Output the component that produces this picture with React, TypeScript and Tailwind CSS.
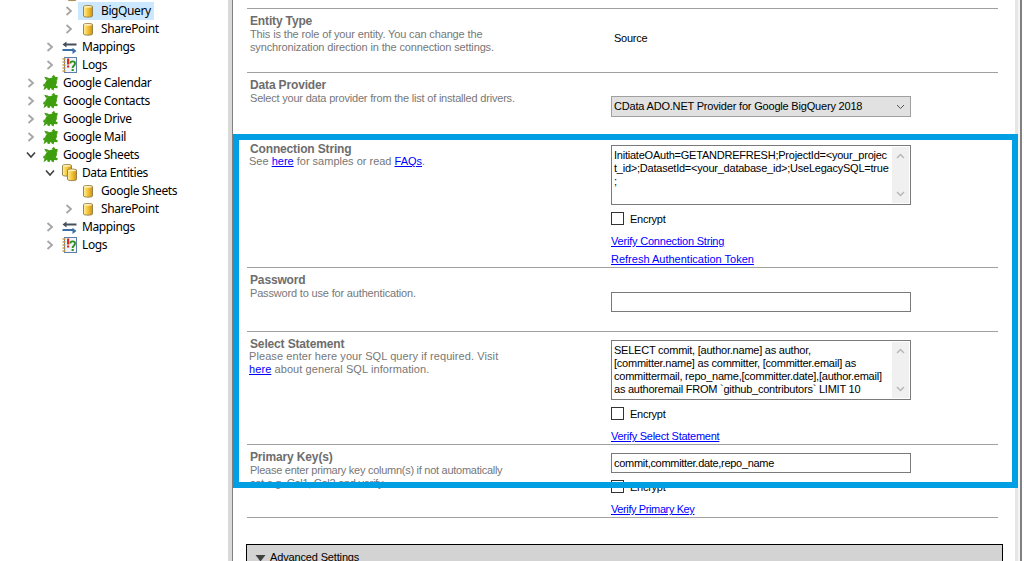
import type { ReactNode } from 'react';

type NodeIcon = 'db' | 'dbs' | 'map' | 'log' | 'google';
type TreeNode = {
  label: string;
  level: 1 | 2 | 3;
  icon: NodeIcon;
  arrow?: 'open' | 'closed';
  selected?: boolean;
};

const LEVEL_PAD: Record<number, string> = {
  1: 'pl-[25px]',
  2: 'pl-[44px]',
  3: 'pl-[63px]',
};

// first row is scrolled off, only the bottom of its icon shows
const TREE: TreeNode[] = [
  { label: '', level: 2, icon: 'dbs', arrow: 'open' },
  { label: 'BigQuery', level: 3, icon: 'db', arrow: 'closed', selected: true },
  { label: 'SharePoint', level: 3, icon: 'db', arrow: 'closed' },
  { label: 'Mappings', level: 2, icon: 'map', arrow: 'closed' },
  { label: 'Logs', level: 2, icon: 'log', arrow: 'closed' },
  { label: 'Google Calendar', level: 1, icon: 'google', arrow: 'closed' },
  { label: 'Google Contacts', level: 1, icon: 'google', arrow: 'closed' },
  { label: 'Google Drive', level: 1, icon: 'google', arrow: 'closed' },
  { label: 'Google Mail', level: 1, icon: 'google', arrow: 'closed' },
  { label: 'Google Sheets', level: 1, icon: 'google', arrow: 'open' },
  { label: 'Data Entities', level: 2, icon: 'dbs', arrow: 'open' },
  { label: 'Google Sheets', level: 3, icon: 'db' },
  { label: 'SharePoint', level: 3, icon: 'db', arrow: 'closed' },
  { label: 'Mappings', level: 2, icon: 'map', arrow: 'closed' },
  { label: 'Logs', level: 2, icon: 'log', arrow: 'closed' },
];

function Arrow({ kind }: { kind?: 'open' | 'closed' }) {
  return (
    <span className="flex h-[18px] w-[12px] shrink-0 items-center justify-center">
      {kind === 'closed' && (
        <svg width="8" height="10" viewBox="0 0 8 10" fill="none">
          <path d="M1.5 1 L6 5 L1.5 9" stroke="#a6a6a6" strokeWidth="1.8" />
        </svg>
      )}
      {kind === 'open' && (
        <svg width="10" height="8" viewBox="0 0 10 8" fill="none">
          <path d="M1 1.5 L5 6 L9 1.5" stroke="#404040" strokeWidth="1.6" />
        </svg>
      )}
    </span>
  );
}

function Cylinder({ x = 0, y = 0 }: { x?: number; y?: number }) {
  return (
    <g transform={`translate(${x} ${y})`}>
      <defs>
        <linearGradient id="gold" x1="0" y1="0" x2="1" y2="0">
          <stop offset="0" stopColor="#fff0a8" />
          <stop offset="0.45" stopColor="#f6c93c" />
          <stop offset="1" stopColor="#d3920c" />
        </linearGradient>
      </defs>
      <path
        d="M0.5 1.5 C0.5 0.3 9.5 0.3 9.5 1.5 V11 C9.5 12.5 0.5 12.5 0.5 11 Z"
        fill="url(#gold)"
        stroke="#8f7a45"
        strokeWidth="0.9"
      />
      <ellipse cx="5" cy="1.8" rx="4" ry="0.9" fill="#fdf2c4" />
    </g>
  );
}

function Icon({ name }: { name: NodeIcon }) {
  if (name === 'db') {
    return (
      <svg width="15" height="18" viewBox="0 0 15 18" className="shrink-0">
        <Cylinder x={2} y={3} />
      </svg>
    );
  }
  if (name === 'dbs') {
    return (
      <svg width="15" height="18" viewBox="0 0 15 18" className="shrink-0">
        <Cylinder x={0} y={0} />
        <Cylinder x={5} y={4.5} />
      </svg>
    );
  }
  if (name === 'map') {
    return (
      <svg width="15" height="18" viewBox="0 0 15 18" className="shrink-0">
        <path d="M14.5 5.5 H4.5 V3.5 L0.5 6.5 L4.5 9.5 V7.5 H14.5 Z" fill="#46505c" />
        <path d="M0.5 11 H10.5 V9.8 L14.5 13 L10.5 16 V13 H0.5 Z" fill="#3b6fa8" />
      </svg>
    );
  }
  if (name === 'log') {
    return (
      <svg width="15" height="18" viewBox="0 0 15 18" className="shrink-0">
        <rect x="2.5" y="1.5" width="12" height="15" fill="#f1f5fb" stroke="#5f7fa6" />
        <path d="M0.5 3 H3.5 M0.5 6 H3.5 M0.5 9 H3.5 M0.5 12 H3.5 M0.5 15 H3.5" stroke="#d69a2a" strokeWidth="1.3" />
        <rect x="5" y="2.5" width="2.2" height="6" fill="#e0281c" />
        <rect x="5" y="9.5" width="2.2" height="2" fill="#e0281c" />
        <path d="M8.3 7.5 C8.3 4.6 13 4.6 13 7.5 C13 10 10.6 9.6 10.6 12" fill="none" stroke="#2f8f1c" strokeWidth="1.9" />
        <rect x="9.6" y="13" width="2.1" height="2" fill="#2f8f1c" />
      </svg>
    );
  }
  return (
    <svg width="15" height="18" viewBox="0 0 15 18" className="shrink-0">
      <ellipse cx="8" cy="9" rx="6.2" ry="5" fill="#3f9e0f" transform="rotate(-30 8 9)" />
      <path
        d="M8.5 3 L11 0.8 L12 2.8 L14.8 3.2 L14 7 Z M3 6 L1.2 2.8 L4.8 3.4 L7 5 Z M1 9 L0 12 L1.5 12.5 L0.5 16.2 L4.5 13.5 Z M9 13 L12.5 11 L15 12.8 L14 14.2 L11.2 14 L10.6 16.6 L8 15 Z M4 13 L7.5 13 L6.5 16.2 L4.5 15.5 Z"
        fill="#3f9e0f"
      />
    </svg>
  );
}

function TreeRow({ node }: { node: TreeNode }) {
  return (
    <div className={`flex h-[18px] items-center whitespace-nowrap ${LEVEL_PAD[node.level]}`}>
      <Arrow kind={node.arrow} />
      <span
        className={`ml-[3px] flex h-[18px] items-center pr-[3px] pl-[3px] ${node.selected ? 'bg-[#cce8ff]' : ''}`}
      >
        <Icon name={node.icon} />
        <span className="ml-[5px] font-['Noto_Sans',sans-serif] text-[12px] leading-[18px] tracking-[-0.4px] text-black">
          {node.label}
        </span>
      </span>
    </div>
  );
}

function FormRow({
  title,
  height,
  desc,
  descClass,
  children,
}: {
  title: string;
  height: string;
  desc: ReactNode;
  descClass: string;
  children: ReactNode;
}) {
  return (
    <div className={`grid grid-cols-[364px_1fr] border-t border-[#a0a0a0] ${height}`}>
      <div className="pt-[5px] pl-[3px]">
        <div className="text-[12px] leading-[14px] font-bold tracking-[-0.15px] text-[#6d6d6d]">{title}</div>
        <div className={`w-[270px] text-[11px] leading-[13px] text-[#777777] ${descClass}`}>{desc}</div>
      </div>
      <div>{children}</div>
    </div>
  );
}

function Link({ children }: { children: ReactNode }) {
  return <span className="text-[#0000ff] underline">{children}</span>;
}

function Encrypt({ className }: { className: string }) {
  return (
    <div className={`flex items-start text-[11px] leading-[13px] tracking-[-0.25px] text-black ${className}`}>
      <span className="h-[13px] w-[13px] border border-[#333333] bg-white" />
      <span className="ml-[6px] pt-[1px]">Encrypt</span>
    </div>
  );
}

function TextBox({ lines, height }: { lines: string[]; height: string }) {
  return (
    <div className={`flex w-[300px] border border-[#7a7a7a] bg-white p-[1px] ${height}`}>
      <div className="min-w-0 flex-1 overflow-hidden pt-[2px] pl-[1px] text-[11px] leading-[13px] tracking-[-0.23px] whitespace-pre text-black">
        {lines.map((line, i) => (
          <div key={i}>{line}</div>
        ))}
      </div>
      <div className="flex w-[17px] flex-col items-center justify-between bg-[#f0f0f0] py-[6px]">
        <svg width="9" height="6" viewBox="0 0 9 6" fill="none">
          <path d="M1 5 L4.5 1.5 L8 5" stroke="#b8b8b8" strokeWidth="1.5" />
        </svg>
        <svg width="9" height="6" viewBox="0 0 9 6" fill="none">
          <path d="M1 1 L4.5 4.5 L8 1" stroke="#b8b8b8" strokeWidth="1.5" />
        </svg>
      </div>
    </div>
  );
}

function Input({ value, className }: { value?: string; className: string }) {
  return (
    <div
      className={`h-[20px] w-[300px] border border-[#7a7a7a] bg-white pl-[2px] text-[11px] leading-[18px] tracking-[-0.3px] text-black ${className}`}
    >
      {value}
    </div>
  );
}

export default function App() {
  return (
    <div className="relative flex h-[561px] w-[1024px] overflow-hidden bg-white font-['Liberation_Sans',sans-serif]">
      <div className="-mt-[16px] w-[228px] shrink-0">
        {TREE.map((node, i) => (
          <TreeRow key={i} node={node} />
        ))}
      </div>

      <div className="w-[4px] shrink-0 bg-[#d9d9d9]" />
      <div className="w-[1px] shrink-0 bg-[#808080]" />

      <div className="w-[782px] shrink-0 pt-[8px] pl-[14px]">
        <div className="w-[751px] border-b border-[#a0a0a0]">
          <FormRow
            title="Entity Type"
            height="h-[64px]"
            descClass="tracking-[-0.14px]"
            desc="This is the role of your entity. You can change the synchronization direction in the connection settings."
          >
            <div className="pt-[23px] pl-[3px] text-[11px] leading-[13px] tracking-[-0.25px] text-black">Source</div>
          </FormRow>

          <FormRow
            title="Data Provider"
            height="h-[64px]"
            descClass="tracking-[-0.2px]"
            desc="Select your data provider from the list of installed drivers."
          >
            <div className="pt-[23px]">
              <div className="flex h-[21px] w-[300px] items-center justify-between border border-[#a0a0a0] bg-[#e1e1e1] pr-[5px] pl-[2px] text-[11px] tracking-[-0.19px] text-black">
                <span>CData ADO.NET Provider for Google BigQuery 2018</span>
                <svg width="9" height="6" viewBox="0 0 9 6" fill="none">
                  <path d="M1 1 L4.5 4.5 L8 1" stroke="#555555" strokeWidth="1" />
                </svg>
              </div>
            </div>
          </FormRow>

          <FormRow
            title="Connection String"
            height="h-[131px]"
            descClass="-mt-[1px] -ml-[1px]"
            desc={
              <>
                See <Link>here</Link> for samples or read <Link>FAQs</Link>.
              </>
            }
          >
            <div className="pt-[8px] text-[11px] leading-[13px]">
              <TextBox
                height="h-[60px]"
                lines={[
                  'InitiateOAuth=GETANDREFRESH;ProjectId=<your_projec',
                  't_id>;DatasetId=<your_database_id>;UseLegacySQL=true',
                  ';',
                ]}
              />
              <Encrypt className="mt-[7px]" />
              <div className="mt-[9px] tracking-[-0.2px]">
                <Link>Verify Connection String</Link>
              </div>
              <div className="mt-[5px]">
                <Link>Refresh Authentication Token</Link>
              </div>
            </div>
          </FormRow>

          <FormRow
            title="Password"
            height="h-[64px]"
            descClass="tracking-[-0.17px]"
            desc="Password to use for authentication."
          >
            <Input className="mt-[24px]" />
          </FormRow>

          <FormRow
            title="Select Statement"
            height="h-[113px]"
            descClass="-mt-[1px] -ml-[1px] tracking-[0.08px]"
            desc={
              <>
                Please enter here your SQL query if required. Visit <Link>here</Link> about general
                SQL information.
              </>
            }
          >
            <div className="pt-[8px] text-[11px] leading-[13px]">
              <TextBox
                height="h-[60px]"
                lines={[
                  'SELECT commit, [author.name] as author,',
                  '[committer.name] as committer, [committer.email] as',
                  'committermail, repo_name,[committer.date],[author.email]',
                  'as authoremail FROM `github_contributors` LIMIT 10',
                ]}
              />
              <Encrypt className="mt-[7px]" />
              <div className="mt-[9px] tracking-[-0.26px]">
                <Link>Verify Select Statement</Link>
              </div>
            </div>
          </FormRow>

          <FormRow
            title="Primary Key(s)"
            height="h-[73px]"
            descClass="max-w-[260px] tracking-[-0.27px]"
            desc="Please enter primary key column(s) if not automatically set e.g. Col1, Col2 and verify."
          >
            <div className="text-[11px] leading-[13px]">
              <Input className="mt-[8px]" value="commit,committer.date,repo_name" />
              <Encrypt className="mt-[7px]" />
              <div className="mt-[9px] tracking-[-0.39px]">
                <Link>Verify Primary Key</Link>
              </div>
            </div>
          </FormRow>
        </div>

        <div className="mt-[26px] -ml-[1px] flex h-[40px] w-[757px] items-start border border-black bg-[#d3d3d3] pt-[5px] pl-[8px] text-[11px] leading-[14px] tracking-[-0.15px] text-black">
          <svg width="11" height="9" viewBox="0 0 11 9" className="mt-[4px]">
            <path d="M0.5 1 H10.5 L5.5 7.5 Z" fill="#404040" />
          </svg>
          <span className="ml-[4px]">Advanced Settings</span>
        </div>
      </div>

      <div className="flex flex-1">
        <div className="w-[3px] bg-[#e6e6e6]" />
        <div className="w-[2px] bg-[#f5f5f5]" />
        <div className="w-[2px] bg-[#808080]" />
      </div>

      <div className="pointer-events-none absolute top-[134px] left-[233px] h-[354px] w-[785px] border-[6px] border-[#009fe3]" />
    </div>
  );
}
